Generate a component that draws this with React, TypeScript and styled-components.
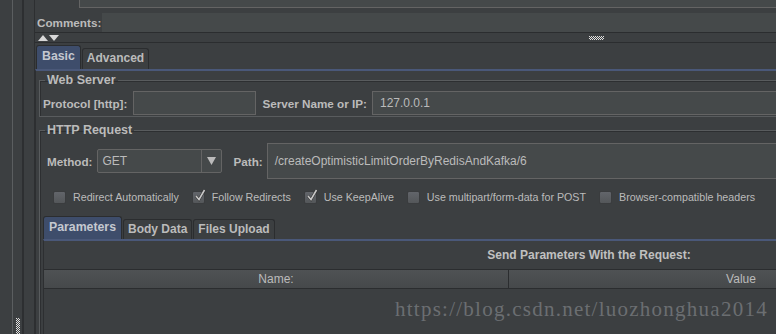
import React from 'react';
import styled, { createGlobalStyle } from 'styled-components';

const GlobalStyle = createGlobalStyle`
  html, body { margin: 0; padding: 0; background: #3c3f41; }
  body { font-family: "Liberation Sans", Arial, sans-serif; }
`;

const Root = styled.div`
  position: relative;
  width: 776px;
  height: 334px;
  overflow: hidden;
  display: flex;
  background: #3c3f41;
  color: #bbbbbb;
  font-size: 12px;
`;

/* left edge: tree border + splitter */
const Gutter = styled.div`
  flex: none;
  width: 34px;
  display: flex;
`;
const TreeEdge = styled.div`
  width: 12px;
  border-right: 1px solid #5b5e60;
`;
const SplitterV = styled.div`
  width: 9px;
  display: flex;
  flex-direction: column;
  justify-content: flex-end;
  align-items: center;
`;
const PanelEdge = styled.div`
  flex: 1;
  border-left: 2px solid #2d2f31;
`;

const Main = styled.div`
  flex: none;
  width: 1106px;
  display: flex;
  flex-direction: column;
  border-left: 1px solid #2d2f31;
  & > * { flex-shrink: 0; }
`;

const NameStub = styled.div`
  height: 7px;
  margin-left: 44px;
  background: #45494a;
  border: 1px solid #646464;
  border-top: none;
`;

const CommentsRow = styled.div`
  display: flex;
  align-items: center;
  height: 19px;
  margin-top: 5px;
  border-bottom: 1px solid #2b2d2f;
`;

const Label = styled.span<{ $pad?: number }>`
  font-weight: bold;
  font-size: 11.7px;
  white-space: nowrap;
  padding-left: ${p => p.$pad ?? 0}px;
`;

const CommentsField = styled.div`
  flex: 1;
  height: 19px;
  margin-left: 1px;
  background: #45494a;
`;

const SplitBar = styled.div`
  display: flex;
  align-items: center;
  height: 9px;
  border-bottom: 1px solid #2b2d2f;
  padding-left: 3px;
`;

const Arrows = styled.div`
  display: flex;
  gap: 1px;
  width: 24px;
`;

const Tri = styled.span<{ $up?: boolean }>`
  width: 0;
  height: 0;
  border-left: 5px solid transparent;
  border-right: 5px solid transparent;
  ${p => (p.$up ? 'border-bottom: 6px solid #d8d8d8;' : 'border-top: 6px solid #d8d8d8;')}
`;

const Grip = styled.div`
  margin-left: 527px;
`;

const TabStrip = styled.div<{ $pad: number; $h: number }>`
  display: flex;
  align-items: flex-end;
  height: ${p => p.$h}px;
  padding-left: ${p => p.$pad}px;
`;

const Tab = styled.div<{ $active?: boolean; $h: number }>`
  box-sizing: border-box;
  height: ${p => (p.$active ? p.$h : p.$h - 3)}px;
  padding: ${p => (p.$active ? '3px 5px 0' : '2px 4px 0')};
  margin-right: 1px;
  border: 1px solid #2b2d2f;
  border-bottom: none;
  border-radius: 3px 3px 0 0;
  background: ${p => (p.$active ? '#3e4d6b' : '#3c3f41')};
  color: ${p => (p.$active ? '#c4c8d0' : '#bbbbbb')};
  font-weight: bold;
  font-size: ${p => (p.$active ? 12.3 : 12)}px;
  white-space: nowrap;
`;

const TabBody = styled.div<{ $pad: number }>`
  border-top: 2px solid #4a5879;
  border-left: 1px solid #2d2f31;
  padding: 0 ${p => p.$pad}px;
  display: flex;
  flex-direction: column;
  & > * { flex-shrink: 0; }
`;

const Group = styled.fieldset<{ $mt: number }>`
  margin: ${p => p.$mt}px 0 0;
  padding: 0 3px 1px;
  border: 1px solid #595c5e;
  box-shadow: inset 1px 1px 0 #2d2f31;
  min-width: 0;
`;

const Legend = styled.legend`
  padding: 0 2px;
  margin-left: 2px;
  font-weight: bold;
  font-size: 12.5px;
  line-height: 16px;
  color: #bbbbbb;
`;

const FieldRow = styled.div<{ $h: number; $pt: number }>`
  display: flex;
  align-items: center;
  height: ${p => p.$h}px;
  padding-top: ${p => p.$pt}px;
`;

const TextField = styled.div<{ $w?: number; $h: number; $ml: number }>`
  box-sizing: border-box;
  ${p => (p.$w ? `width: ${p.$w}px; flex: none;` : 'flex: 1;')}
  height: ${p => p.$h}px;
  margin-left: ${p => p.$ml}px;
  padding-left: 7px;
  display: flex;
  align-items: center;
  background: #45494a;
  border: 1px solid #646464;
  color: #bbbbbb;
  white-space: nowrap;
`;

const Combo = styled.div`
  box-sizing: border-box;
  flex: none;
  width: 125px;
  height: 24px;
  margin-left: 5px;
  display: flex;
  background: #45494a;
  border: 1px solid #646464;
  border-radius: 2px;
`;

const ComboValue = styled.div`
  flex: 1;
  padding-left: 4px;
  display: flex;
  align-items: center;
`;

const ComboButton = styled.div`
  width: 19px;
  border-left: 1px solid #646464;
  display: flex;
  align-items: center;
  justify-content: center;
`;

const CheckRow = styled.div`
  display: flex;
  align-items: center;
  height: 14px;
  margin-top: 11px;
  padding-left: 10px;
`;

const CheckItem = styled.label`
  display: flex;
  align-items: center;
  gap: 7px;
  margin-right: 13px;
  font-size: 10.7px;
  white-space: nowrap;
`;

const Box = styled.span`
  box-sizing: border-box;
  width: 13px;
  height: 13px;
  border: 1px solid #3a3c3e;
  border-radius: 2px;
  background: linear-gradient(#62656a, #54575a);
  position: relative;
  display: block;
`;

const Mark = styled.svg`
  position: absolute;
  left: 1px;
  top: -3px;
`;

const InnerTabs = styled.div`
  margin-top: 12px;
  display: flex;
  flex-direction: column;
`;

const Caption = styled.div`
  height: 28px;
  line-height: 28px;
  text-align: center;
  font-weight: bold;
  font-size: 12px;
  color: #c0c0c0;
`;

const Table = styled.div`
  border-top: 1px solid #2b2d2f;
  min-height: 80px;
`;

const HeaderRow = styled.div`
  display: grid;
  grid-template-columns: 465px 465px 1fr;
  height: 18px;
  border-bottom: 1px solid #2b2d2f;
  background: linear-gradient(#4f5254, #46494b);
`;

const HeadCell = styled.div`
  text-align: center;
  line-height: 18px;
  font-size: 12px;
  color: #bbbbbb;
  border-right: 1px solid #2b2d2f;
`;

const Watermark = styled.div`
  position: absolute;
  left: 395px;
  top: 297px;
  font-family: "Liberation Serif", "Times New Roman", serif;
  font-size: 21px;
  letter-spacing: 1.25px;
  color: #6b6e71;
  white-space: nowrap;
`;

const Check = ({ checked, label }: { checked?: boolean; label: string }) => (
  <CheckItem>
    <Box>
      {checked && (
        <Mark width="12" height="13" viewBox="0 0 12 13">
          <path d="M2 7 L5 10.5 L10.5 1" fill="none" stroke="#2a2a2a" strokeWidth="2.6" />
          <path d="M2 7 L5 10.5 L10.5 1" fill="none" stroke="#c8c8c8" strokeWidth="1.6" />
        </Mark>
      )}
    </Box>
    {label}
  </CheckItem>
);

const Dots = ({ w, h }: { w: number; h: number }) => {
  const cells = [];
  for (let y = 0; y < h; y++)
    for (let x = 0; x < w; x++)
      if ((x + y) % 2 === 0) cells.push(<rect key={`${x}-${y}`} x={x} y={y} width="1" height="1" fill="#e0e0e0" />);
  return (
    <svg width={w} height={h} style={{ display: 'block' }}>
      {cells}
    </svg>
  );
};

export default function App() {
  return (
    <>
      <GlobalStyle />
      <Root>
        <Gutter>
          <TreeEdge />
          <SplitterV>
            <Dots w={4} h={16} />
          </SplitterV>
          <PanelEdge />
        </Gutter>
        <Main>
          <NameStub />
          <CommentsRow>
            <Label $pad={2}>Comments:</Label>
            <CommentsField />
          </CommentsRow>
          <SplitBar>
            <Arrows>
              <Tri $up />
              <Tri />
            </Arrows>
            <Grip>
              <Dots w={15} h={4} />
            </Grip>
          </SplitBar>

          <TabStrip $pad={1} $h={26}>
            <Tab $active $h={24}>Basic</Tab>
            <Tab $h={24}>Advanced</Tab>
          </TabStrip>
          <TabBody $pad={3}>
            <Group $mt={1}>
              <Legend>Web Server</Legend>
              <FieldRow $h={24} $pt={3}>
                <Label>Protocol [http]:</Label>
                <TextField $w={123} $h={24} $ml={6} />
                <Label $pad={6}>Server Name or IP:</Label>
                <TextField $h={24} $ml={5}>127.0.0.1</TextField>
              </FieldRow>
            </Group>

            <Group $mt={5}>
              <Legend>HTTP Request</Legend>
              <FieldRow $h={36} $pt={5}>
                <Label $pad={4}>Method:</Label>
                <Combo>
                  <ComboValue>GET</ComboValue>
                  <ComboButton>
                    <svg width="9" height="8" viewBox="0 0 9 8">
                      <path d="M0 0 H9 L4.5 8 Z" fill="#bbbbbb" />
                    </svg>
                  </ComboButton>
                </Combo>
                <Label $pad={11}>Path:</Label>
                <TextField $h={36} $ml={4}>/createOptimisticLimitOrderByRedisAndKafka/6</TextField>
              </FieldRow>

              <CheckRow>
                <Check label="Redirect Automatically" />
                <Check checked label="Follow Redirects" />
                <Check checked label="Use KeepAlive" />
                <Check label="Use multipart/form-data for POST" />
                <Check label="Browser-compatible headers" />
              </CheckRow>

              <InnerTabs>
                <TabStrip $pad={0} $h={23}>
                  <Tab $active $h={23}>Parameters</Tab>
                  <Tab $h={23}>Body Data</Tab>
                  <Tab $h={23}>Files Upload</Tab>
                </TabStrip>
                <TabBody $pad={0}>
                  <Caption>Send Parameters With the Request:</Caption>
                  <Table>
                    <HeaderRow>
                      <HeadCell>Name:</HeadCell>
                      <HeadCell>Value</HeadCell>
                      <HeadCell />
                    </HeaderRow>
                  </Table>
                </TabBody>
              </InnerTabs>
            </Group>
          </TabBody>
        </Main>
        <Watermark>https://blog.csdn.net/luozhonghua2014</Watermark>
      </Root>
    </>
  );
}
